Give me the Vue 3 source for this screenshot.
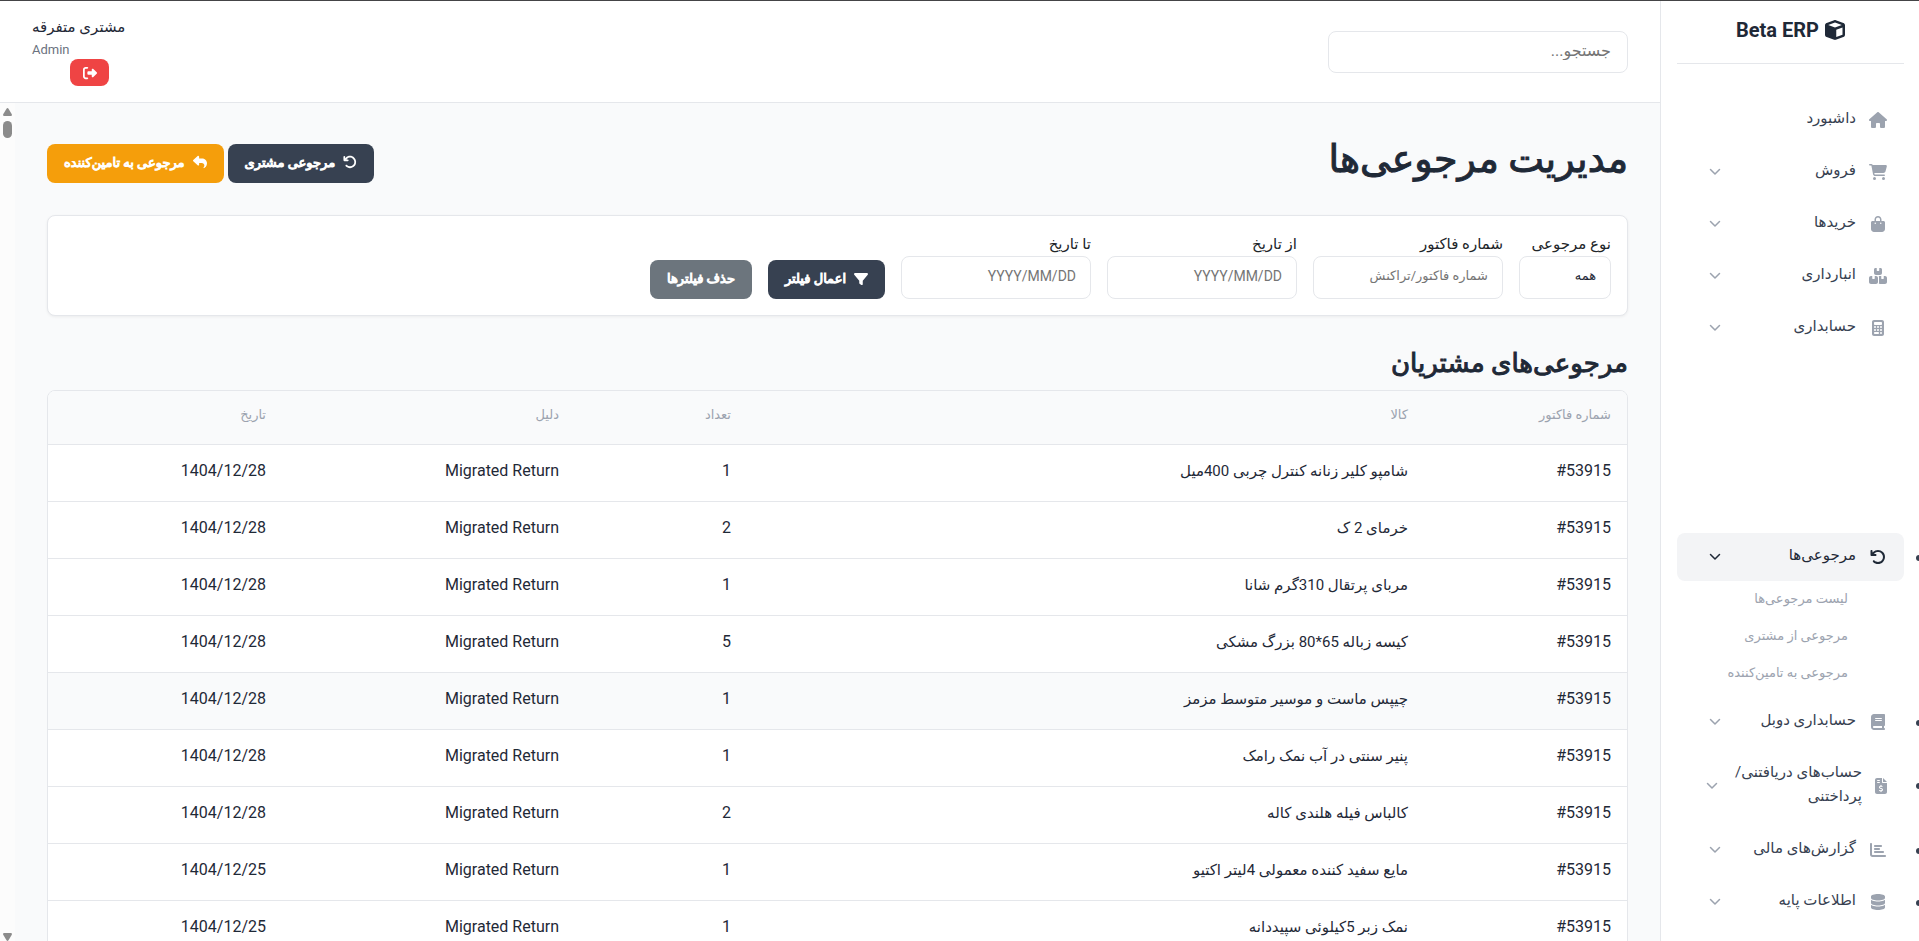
<script setup>
const icons = {
  cube: { w: 512, d: 'M234.500 5.700c13.900-5 29.100-5 43.100 0l192 68.600C495 83.400 512 107.500 512 134.600V377.400c0 27-17 51.200-42.500 60.300l-192 68.600c-13.900 5-29.100 5-43.100 0l-192-68.600C17 428.600 0 404.500 0 377.400V134.600c0-27 17-51.200 42.500-60.300l192-68.600zM256 66L82.300 128 256 190l173.700-62L256 66zm32 368.600l160-57.100v-188L288 246.600v188z' },
  house: { w: 576, d: 'M575.8 255.500c0 18-15 32.100-32 32.100h-32l.7 160.200c0 2.700-.2 5.400-.5 8.100V472c0 22.100-17.900 40-40 40H456c-1.100 0-2.200 0-3.300-.1c-1.400 .1-2.800 .1-4.200 .1H416 392c-22.100 0-40-17.900-40-40V448 384c0-17.700-14.300-32-32-32H256c-17.700 0-32 14.300-32 32v64 24c0 22.100-17.900 40-40 40H160 128.100c-1.500 0-3-.1-4.500-.2c-1.200 .1-2.400 .2-3.600 .2H104c-22.100 0-40-17.900-40-40V360c0-.9 0-1.900 .1-2.800V287.600H32c-18 0-32-14-32-32.100c0-9 3-17 10-24L266.400 8c7-7 15-8 22-8s15 2 21 7L564.800 231.500c8 7 12 15 11 24z' },
  cart: { w: 576, d: 'M0 24C0 10.700 10.700 0 24 0H69.500c22 0 41.500 12.800 50.600 32h411c26.300 0 45.500 25 38.600 50.400l-41 152.300c-8.500 31.400-37 53.300-69.500 53.300H170.700l5.400 28.500c2.200 11.300 12.100 19.500 23.600 19.500H488c13.300 0 24 10.700 24 24s-10.700 24-24 24H199.700c-34.600 0-64.300-24.600-70.700-58.500L77.400 54.500c-.7-3.800-4-6.500-7.900-6.500H24C10.700 48 0 37.300 0 24zM128 464a48 48 0 1 1 96 0 48 48 0 1 1 -96 0zm336-48a48 48 0 1 1 0 96 48 48 0 1 1 0-96z' },
  bag: { w: 448, d: 'M160 112c0-35.300 28.700-64 64-64s64 28.700 64 64v48H160V112zm-48 48H48c-26.500 0-48 21.500-48 48V416c0 53 43 96 96 96H352c53 0 96-43 96-96V208c0-26.500-21.500-48-48-48H336V112C336 50.100 285.900 0 224 0S112 50.100 112 112v48zm24 48a24 24 0 1 1 0 48 24 24 0 1 1 0-48zm152 24a24 24 0 1 1 48 0 24 24 0 1 1 -48 0z' },
  boxes: { w: 576, d: 'M248 0H208c-26.500 0-48 21.500-48 48V160c0 35.300 28.700 64 64 64H352c35.300 0 64-28.700 64-64V48c0-26.500-21.500-48-48-48H328V80c0 8.800-7.200 16-16 16H264c-8.800 0-16-7.200-16-16V0zM64 256c-35.300 0-64 28.700-64 64V448c0 35.300 28.700 64 64 64H224c35.300 0 64-28.700 64-64V320c0-35.300-28.700-64-64-64H184v80c0 8.800-7.200 16-16 16H120c-8.800 0-16-7.200-16-16V256H64zM352 512H512c35.300 0 64-28.700 64-64V320c0-35.300-28.700-64-64-64H472v80c0 8.800-7.200 16-16 16H408c-8.800 0-16-7.200-16-16V256H352c-15 0-28.800 5.100-39.700 13.800c4.900 10.400 7.700 22 7.700 34.200V464c0 12.200-2.800 23.800-7.700 34.200C323.200 506.900 337 512 352 512z' },
  calculator: { w: 384, d: 'M64 0C28.700 0 0 28.700 0 64V448c0 35.300 28.700 64 64 64H320c35.300 0 64-28.700 64-64V64c0-35.300-28.700-64-64-64H64zM96 64H288c17.700 0 32 14.300 32 32v32c0 17.700-14.300 32-32 32H96c-17.700 0-32-14.300-32-32V96c0-17.700 14.300-32 32-32zm32 160a32 32 0 1 1 -64 0 32 32 0 1 1 64 0zM96 352a32 32 0 1 1 0-64 32 32 0 1 1 0 64zM64 416c0-17.700 14.300-32 32-32h96c17.700 0 32 14.300 32 32s-14.300 32-32 32H96c-17.700 0-32-14.300-32-32zM192 256a32 32 0 1 1 0-64 32 32 0 1 1 0 64zm32 64a32 32 0 1 1 -64 0 32 32 0 1 1 64 0zm64-64a32 32 0 1 1 0-64 32 32 0 1 1 0 64zm32 64a32 32 0 1 1 -64 0 32 32 0 1 1 64 0zM288 448a32 32 0 1 1 0-64 32 32 0 1 1 0 64z' },
  undo: { w: 512, d: 'M125.700 160H176c17.700 0 32 14.300 32 32s-14.300 32-32 32H48c-17.700 0-32-14.300-32-32V64c0-17.700 14.300-32 32-32s32 14.300 32 32v51.200L97.600 97.600c87.500-87.500 229.300-87.500 316.800 0s87.500 229.300 0 316.800s-229.300 87.500-316.800 0c-12.500-12.500-12.500-32.800 0-45.300s32.800-12.500 45.300 0c62.500 62.500 163.800 62.500 226.300 0s62.500-163.800 0-226.300s-163.800-62.500-226.300 0L125.700 160z' },
  book: { w: 448, d: 'M96 0C43 0 0 43 0 96V416c0 53 43 96 96 96H384h32c17.700 0 32-14.300 32-32s-14.300-32-32-32V384c17.700 0 32-14.300 32-32V32c0-17.700-14.300-32-32-32H384 96zm0 384H352v64H96c-17.700 0-32-14.300-32-32s14.300-32 32-32zm32-240c0-8.800 7.200-16 16-16H336c8.800 0 16 7.200 16 16s-7.200 16-16 16H144c-8.800 0-16-7.200-16-16zm16 48H336c8.800 0 16 7.200 16 16s-7.200 16-16 16H144c-8.800 0-16-7.200-16-16s7.200-16 16-16z' },
  invoice: { w: 384, d: 'M64 0C28.700 0 0 28.700 0 64V448c0 35.300 28.700 64 64 64H320c35.300 0 64-28.700 64-64V160H256c-17.700 0-32-14.300-32-32V0H64zM256 0V128H384L256 0zM64 80c0-8.800 7.200-16 16-16h64c8.800 0 16 7.200 16 16s-7.200 16-16 16H80c-8.800 0-16-7.200-16-16zm0 64c0-8.800 7.200-16 16-16h64c8.800 0 16 7.200 16 16s-7.200 16-16 16H80c-8.800 0-16-7.200-16-16zm128 72c8.800 0 16 7.200 16 16v17.300c8.500 1.200 16.700 3.100 24.100 5.100c8.500 2.300 13.600 11 11.300 19.600s-11 13.600-19.600 11.300c-11.100-3-22-5.200-32.100-5.300c-8.400-.1-17.400 1.800-23.600 5.500c-5.700 3.400-8.100 7.300-8.100 12.800c0 3.700 1.300 6.500 7.300 10.100c6.900 4.100 16.600 7.100 29.200 10.900l.5 .1c11.300 3.400 25.300 7.600 36.300 14.600c12.100 7.600 22.400 19.700 22.700 38.200c.3 19.300-9.600 33.300-22.900 41.600c-7.700 4.800-16.400 7.600-25.100 9.100V440c0 8.800-7.200 16-16 16s-16-7.200-16-16V422.200c-11.200-2.100-21.700-5.700-30.900-8.900c-2.100-.7-4.200-1.400-6.200-2.100c-8.400-2.800-12.900-11.900-10.100-20.200s11.900-12.900 20.200-10.100c2.500 .8 4.800 1.600 7.100 2.400c13.600 4.600 24.600 8.400 36.300 8.700c9.100 .3 17.900-1.700 23.700-5.300c5.100-3.200 7.900-7.300 7.800-14c-.1-4.600-1.800-7.800-7.700-11.600c-6.800-4.300-16.500-7.400-29-11.200l-1.600-.5c-11-3.300-24.300-7.300-34.800-13.700c-12-7.200-22.600-18.900-22.700-37.300c-.1-19.400 10.800-32.800 23.800-40.500c7.500-4.400 15.800-7.200 24.100-8.700V232c0-8.800 7.200-16 16-16z' },
  chart: { w: 512, d: 'M32 32c17.700 0 32 14.300 32 32V400c0 8.800 7.200 16 16 16H480c17.700 0 32 14.300 32 32s-14.300 32-32 32H80c-44.200 0-80-35.800-80-80V64C0 46.300 14.300 32 32 32zm96 96c0-17.700 14.300-32 32-32l192 0c17.700 0 32 14.300 32 32s-14.300 32-32 32H160c-17.700 0-32-14.300-32-32zm32 64H288c17.700 0 32 14.300 32 32s-14.300 32-32 32H160c-17.700 0-32-14.300-32-32s14.300-32 32-32zm0 96H416c17.700 0 32 14.300 32 32s-14.300 32-32 32H160c-17.700 0-32-14.300-32-32s14.300-32 32-32z' },
  database: { w: 448, d: 'M448 80v48c0 44.200-100.300 80-224 80S0 172.200 0 128V80C0 35.800 100.300 0 224 0S448 35.800 448 80zM393.200 214.700c20.800-7.400 39.900-16.900 54.800-28.600V288c0 44.200-100.300 80-224 80S0 332.200 0 288V186.100c14.900 11.800 34 21.200 54.800 28.600C99.700 230.700 159.500 240 224 240s124.300-9.300 169.200-25.300zM0 346.100c14.900 11.800 34 21.200 54.800 28.600C99.700 390.700 159.500 400 224 400s124.300-9.300 169.200-25.300c20.800-7.400 39.900-16.900 54.800-28.600V432c0 44.200-100.300 80-224 80S0 476.200 0 432V346.100z' },
  reply: { w: 512, d: 'M205 34.800c11.500 5.100 19 16.600 19 29.200v64H336c97.200 0 176 78.800 176 176c0 113.300-81.500 163.900-100.200 174.100c-2.500 1.400-5.300 1.900-8.100 1.900c-10.900 0-19.700-8.900-19.700-19.700c0-7.500 4.300-14.400 9.800-19.500c9.400-8.800 22.200-26.400 22.200-56.700c0-53-43-96-96-96H224v64c0 12.600-7.400 24.100-19 29.200s-25 3-34.400-5.400l-160-144C3.900 225.700 0 217.100 0 208s3.900-17.700 10.600-23.800l160-144c9.400-8.500 22.900-10.600 34.400-5.400z' },
  exit: { w: 512, d: 'M377.900 105.900L500.700 228.700c7.200 7.200 11.300 17.100 11.300 27.300s-4.100 20.100-11.300 27.300L377.900 406.100c-6.400 6.400-15 9.900-24 9.900c-18.700 0-33.900-15.200-33.900-33.900l0-62.100-128 0c-17.700 0-32-14.300-32-32l0-64c0-17.700 14.300-32 32-32l128 0 0-62.100c0-18.700 15.200-33.900 33.900-33.900c9 0 17.600 3.600 24 9.900zM160 96L96 96c-17.700 0-32 14.300-32 32l0 256c0 17.700 14.300 32 32 32l64 0c17.700 0 32 14.300 32 32s-14.300 32-32 32l-64 0c-53 0-96-43-96-96L0 128C0 75 43 32 96 32l64 0c17.700 0 32 14.300 32 32s-14.300 32-32 32z' },
  filter: { w: 512, d: 'M3.900 54.900C10.500 40.900 24.500 32 40 32H472c15.500 0 29.500 8.900 36.100 22.900s4.600 30.500-5.200 42.500L320 320.900V448c0 12.100-6.800 23.200-17.700 28.600s-23.800 4.300-33.500-3l-64-48c-8.100-6-12.800-15.500-12.800-25.600V320.900L9 97.300C-.7 85.400-2.800 68.800 3.900 54.900z' },
}

const topMenu = [
  { label: 'داشبورد', icon: 'house', leaf: true },
  { label: 'فروش', icon: 'cart' },
  { label: 'خریدها', icon: 'bag' },
  { label: 'انبارداری', icon: 'boxes' },
  { label: 'حسابداری', icon: 'calculator' },
]
const bottomMenu = [
  { label: 'مرجوعی‌ها', icon: 'undo', active: true, children: ['لیست مرجوعی‌ها', 'مرجوعی از مشتری', 'مرجوعی به تامین‌کننده'] },
  { label: 'حسابداری دوبل', icon: 'book' },
  { label: 'حساب‌های دریافتنی/\nپرداختنی', icon: 'invoice', wide: true },
  { label: 'گزارش‌های مالی', icon: 'chart' },
  { label: 'اطلاعات پایه', icon: 'database' },
]
const columns = ['شماره فاکتور', 'کالا', 'تعداد', 'دلیل', 'تاریخ']
const rows = [
  ['شامپو کلیر زنانه کنترل چربی 400میل', 1, '1404/12/28'],
  ['خرمای 2 ک', 2, '1404/12/28'],
  ['مربای پرتقال 310گرم شانا', 1, '1404/12/28'],
  ['کیسه زباله 65*80 بزرگ مشکی', 5, '1404/12/28'],
  ['چیپس ماست و موسیر متوسط مزمز', 1, '1404/12/28'],
  ['پنیر سنتی در آب نمک رامک', 1, '1404/12/28'],
  ['کالباس فیله هلندی کاله', 2, '1404/12/28'],
  ['مایع سفید کننده معمولی 4لیتر اکتیو', 1, '1404/12/25'],
  ['نمک زبر 5کیلوئی سپیددانه', 1, '1404/12/25'],
]
const fields = [
  { id: 'invoice', label: 'شماره فاکتور', hint: 'شماره فاکتور/تراکنش' },
  { id: 'from', label: 'از تاریخ', hint: 'YYYY/MM/DD', date: true },
  { id: 'to', label: 'تا تاریخ', hint: 'YYYY/MM/DD', date: true },
]
const box = (name) => `0 0 ${icons[name].w} 512`
</script>

<template>
  <div class="app" dir="rtl">
    <aside class="sidebar">
      <div class="brand">
        <svg class="brand-icon" :viewBox="box('cube')"><path :d="icons.cube.d" /></svg>
        <span>Beta ERP</span>
      </div>
      <nav class="nav">
        <ul class="menu">
          <li v-for="m in topMenu" :key="m.label">
            <a href="#" class="item">
              <span class="item-icon"><svg :viewBox="box(m.icon)"><path :d="icons[m.icon].d" /></svg></span>
              <span class="item-label">{{ m.label }}</span>
              <svg v-if="!m.leaf" class="chevron" viewBox="0 0 12 8"><path d="M1.500 1.500 6 6l4.500-4.500" /></svg>
            </a>
          </li>
        </ul>
        <ul class="menu bulleted">
          <li v-for="m in bottomMenu" :key="m.label">
            <a href="#" class="item" :class="{ active: m.active, wide: m.wide }">
              <span class="item-icon"><svg :viewBox="box(m.icon)"><path :d="icons[m.icon].d" /></svg></span>
              <span class="item-label">{{ m.label }}</span>
              <svg class="chevron" viewBox="0 0 12 8"><path d="M1.500 1.500 6 6l4.500-4.500" /></svg>
            </a>
            <ul v-if="m.children" class="submenu">
              <li v-for="c in m.children" :key="c"><a href="#">{{ c }}</a></li>
            </ul>
          </li>
        </ul>
      </nav>
    </aside>

    <div class="main">
      <header class="topbar">
        <input class="search" type="text" placeholder="جستجو..." aria-label="جستجو" />
        <div class="user">
          <div class="user-text">
            <div class="user-name">مشتری متفرقه</div>
            <div class="user-role">Admin</div>
          </div>
          <button class="logout" type="button" aria-label="خروج">
            <svg :viewBox="box('exit')"><path :d="icons.exit.d" /></svg>
          </button>
        </div>
      </header>

      <div class="body">
        <main class="content">
          <div class="page-head">
            <h1>مدیریت مرجوعی‌ها</h1>
            <div class="actions">
              <button class="btn dark" type="button"><svg :viewBox="box('undo')"><path :d="icons.undo.d" /></svg>مرجوعی مشتری</button>
              <button class="btn amber" type="button"><svg :viewBox="box('reply')"><path :d="icons.reply.d" /></svg>مرجوعی به تامین‌کننده</button>
            </div>
          </div>

          <form class="card" @submit.prevent>
            <div class="field short">
              <label for="kind">نوع مرجوعی</label>
              <select id="kind"><option>همه</option></select>
            </div>
            <div v-for="f in fields" :key="f.id" class="field">
              <label :for="f.id">{{ f.label }}</label>
              <input :id="f.id" type="text" :class="{ date: f.date }" :placeholder="f.hint" />
            </div>
            <button class="btn dark" type="submit"><svg :viewBox="box('filter')"><path :d="icons.filter.d" /></svg>اعمال فیلتر</button>
            <button class="btn gray" type="button">حذف فیلترها</button>
          </form>

          <h2>مرجوعی‌های مشتریان</h2>
          <div class="table-wrap">
            <table>
              <colgroup><col class="c1" /><col class="c2" /><col class="c3" /><col class="c4" /><col class="c5" /></colgroup>
              <thead>
                <tr><th v-for="c in columns" :key="c" scope="col">{{ c }}</th></tr>
              </thead>
              <tbody>
                <tr v-for="(r, i) in rows" :key="i" :class="{ hovered: i === 4 }">
                  <td><bdi dir="ltr">#53915</bdi></td>
                  <td class="product">{{ r[0] }}</td>
                  <td>{{ r[1] }}</td>
                  <td>Migrated Return</td>
                  <td>{{ r[2] }}</td>
                </tr>
              </tbody>
            </table>
          </div>
        </main>
        <div class="scrollbar" aria-hidden="true">
          <svg class="arrow" viewBox="0 0 9 8"><path d="M4.500 0Q5 0 5.500.7L8.800 6.300Q9.200 8 8 8H1Q-.2 8 .2 6.300L3.500.7Q4 0 4.500 0z" /></svg>
          <span class="thumb"></span>
          <svg class="arrow down" viewBox="0 0 9 8"><path d="M4.500 0Q5 0 5.500.7L8.800 6.300Q9.200 8 8 8H1Q-.2 8 .2 6.300L3.500.7Q4 0 4.500 0z" /></svg>
        </div>
      </div>
    </div>
  </div>
</template>

<style>
body {
  overflow: hidden;
}
</style>

<style scoped>
* {
  box-sizing: border-box;
}
.app {
  display: flex;
  height: 100vh;
  overflow: hidden;
  border-top: 1px solid #444446;
  background: #f9fafb;
  color: #1f2937;
  font-family: Roboto, "DejaVu Sans", sans-serif;
  font-size: 16px;
  line-height: 24px;
}
svg {
  fill: currentColor;
  flex: none;
}
a {
  color: inherit;
  text-decoration: none;
}
ul {
  margin: 0;
  padding: 0;
  list-style: none;
}
button,
input,
select {
  font-family: inherit;
}
.sidebar {
  flex: none;
  width: 259px;
  padding: 0 15px 0 16px;
  border-left: 1px solid #e5e7eb;
  background: #fff;
}
.brand {
  display: flex;
  align-items: center;
  justify-content: center;
  gap: 6px;
  height: 63px;
  padding-bottom: 4px;
  border-bottom: 1px solid #e5e7eb;
  font-size: 20px;
  font-weight: 700;
}
.brand-icon {
  width: 20px;
  height: 20px;
}
.nav {
  display: flex;
  flex-direction: column;
  justify-content: space-between;
  height: calc(100vh - 75px);
  padding-top: 32px;
}
.menu > li {
  margin-bottom: 4px;
}
.bulleted > li {
  position: relative;
}
.bulleted > li::before {
  content: "";
  position: absolute;
  top: 22px;
  right: -18px;
  width: 6px;
  height: 6px;
  border-radius: 50%;
  background: #374151;
}
.bulleted > li:nth-child(3)::before {
  top: 33px;
}
.item {
  display: flex;
  align-items: center;
  min-height: 48px;
  padding: 12px 16px;
  border-radius: 8px;
  color: #374151;
  font-size: 15px;
}
.item-icon {
  display: flex;
  justify-content: center;
  flex: none;
  width: 20px;
  margin-left: 12px;
  color: #9ca3af;
}
.item-icon svg {
  height: 16px;
}
.item-label {
  flex: 1;
  padding-bottom: 2px;
  margin-top: -2px;
  white-space: pre;
}
.chevron {
  width: 12px;
  height: 8px;
  margin-left: 16px;
  fill: none;
  stroke: #9ca3af;
  stroke-width: 1.500;
  stroke-linecap: round;
  stroke-linejoin: round;
}
.wide .item-icon {
  width: 14px;
}
.wide .chevron {
  margin-left: 13px;
}
.active {
  background: #f3f4f6;
  color: #1f2937;
  font-weight: 500;
}
.active .item-icon {
  color: #1f2937;
}
.active .chevron {
  stroke: #1f2937;
}
.submenu {
  padding: 0 56px 2px 0;
  color: #9ca3af;
  font-size: 13px;
}
.submenu li {
  height: 37px;
  line-height: 36px;
  white-space: nowrap;
}
.main {
  display: flex;
  flex: 1;
  flex-direction: column;
  min-width: 0;
}
.topbar {
  display: flex;
  justify-content: space-between;
  align-items: flex-start;
  height: 102px;
  padding: 12px 32px;
  border-bottom: 1px solid #e5e7eb;
  background: #fff;
}
.search {
  width: 300px;
  height: 42px;
  margin-top: 18px;
  padding: 0 16px 4px;
  border: 1px solid #e5e7eb;
  border-radius: 8px;
  font-size: 16px;
}
.user {
  display: flex;
  flex-direction: column;
  align-items: center;
}
.user-text {
  text-align: left;
}
.user-name {
  font-size: 15px;
  font-weight: 500;
  line-height: 28px;
}
.user-role {
  color: #6b7280;
  font-size: 13px;
  line-height: 18px;
}
.logout {
  display: flex;
  align-items: center;
  justify-content: center;
  width: 39px;
  height: 27px;
  margin-left: 22px;
  border: 0;
  border-radius: 8px;
  background: #ef4444;
  color: #fff;
}
.logout svg {
  width: 14px;
  height: 14px;
}
.body {
  display: flex;
  flex: 1;
  min-height: 0;
}
.content {
  flex: 1;
  min-width: 0;
  padding: 32px;
  overflow: hidden;
}
.page-head {
  display: flex;
  align-items: center;
  justify-content: space-between;
  height: 56px;
  margin-bottom: 24px;
}
h1 {
  margin: 0;
  padding-bottom: 8px;
  font-size: 38px;
  font-weight: 500;
  line-height: 48px;
  -webkit-text-stroke: 1px currentColor;
}
.actions {
  display: flex;
  gap: 4px;
}
.btn {
  display: inline-flex;
  align-items: center;
  gap: 8px;
  height: 39px;
  padding: 0 17px 2px;
  border: 0;
  border-radius: 8px;
  color: #fff;
  font-size: 13px;
  font-weight: 500;
  white-space: nowrap;
  -webkit-text-stroke: 1px currentColor;
}
.btn svg {
  width: 14px;
  height: 14px;
}
.dark {
  background: #374151;
}
.amber {
  background: #f59e0b;
}
.gray {
  background: #6c757d;
}
.card {
  display: flex;
  align-items: flex-end;
  gap: 16px;
  padding: 16px;
  border: 1px solid #e5e7eb;
  border-radius: 8px;
  background: #fff;
  box-shadow: 0 1px 3px rgba(0, 0, 0, 0.06);
}
.field {
  display: flex;
  flex-direction: column;
  width: 190px;
}
.short {
  width: 92px;
}
.field label {
  color: #212529;
  font-size: 15px;
  white-space: nowrap;
}
.field input,
.field select {
  width: 100%;
  height: 43px;
  padding: 0 14px 4px;
  border: 1px solid #e5e7eb;
  border-radius: 8px;
  background: #fff;
  color: #1f2937;
  font-size: 13px;
  appearance: none;
}
.field .date {
  font-size: 14px;
}
h2 {
  margin: 26px 0 6px;
  font-size: 26px;
  font-weight: 500;
  line-height: 42px;
  -webkit-text-stroke: 1px currentColor;
}
.table-wrap {
  overflow: hidden;
  border: 1px solid #e5e7eb;
  border-radius: 8px;
  background: #fff;
}
table {
  width: 100%;
  table-layout: fixed;
  border-collapse: collapse;
  text-align: right;
}
.c1 { width: 203px; }
.c2 { width: 677px; }
.c3 { width: 172px; }
.c4 { width: 293px; }
th,
td {
  border-bottom: 1px solid #e5e7eb;
  white-space: nowrap;
}
th {
  height: 53px;
  padding: 0 16px 4px;
  background: #f9fafb;
  color: #9ca3af;
  font-size: 13px;
  font-weight: 500;
}
td {
  height: 57px;
  padding: 0 16px 4px;
}
.product {
  font-size: 15px;
}
.hovered {
  background: #f9fafb;
}
.scrollbar {
  display: flex;
  flex-direction: column;
  align-items: center;
  width: 15px;
  padding: 5px 0 0;
  background: #fcfcfc;
}
.arrow {
  width: 9px;
  height: 8px;
  fill: #8b8b8b;
}
.thumb {
  width: 9px;
  height: 17px;
  margin-top: 5px;
  border-radius: 5px;
  background: #8b8b8b;
}
.down {
  margin-top: auto;
  transform: rotate(180deg);
}
</style>
